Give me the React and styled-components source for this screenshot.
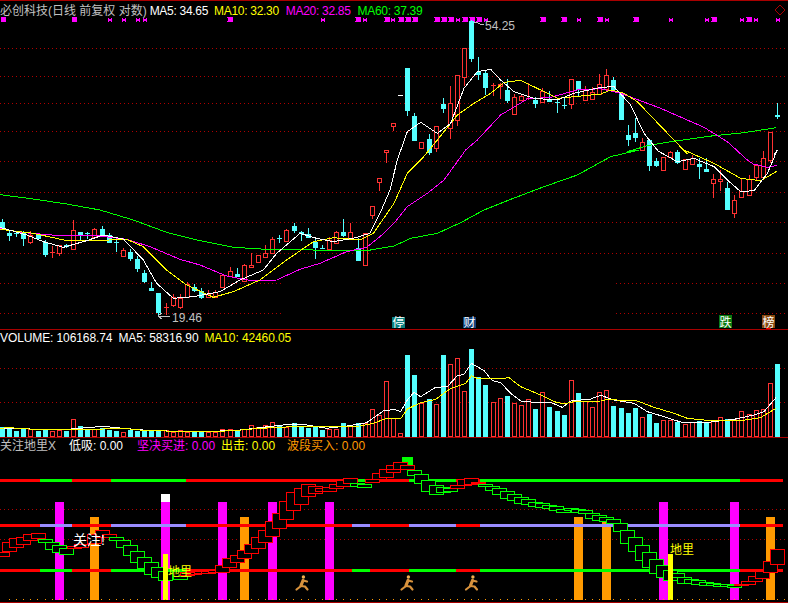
import React from 'react'
import styled, { createGlobalStyle } from 'styled-components'

const GlobalStyle = createGlobalStyle`
  html, body {
    margin: 0;
    padding: 0;
    background: #000;
  }
`

const cyan = '#54ffff'
const red = '#ff3232'
const lineRed = '#ff0000'
const gridRed = '#b00000'

const Page = styled.div`
  display: flex;
  flex-direction: column;
  width: 788px;
  height: 603px;
  overflow: hidden;
  background: #000;
  font-family: 'Liberation Sans', 'Noto Sans CJK SC', sans-serif;
  font-size: 12px;
  line-height: 14px;
`

const Panel = styled.section`
  position: relative;
  flex: none;
  height: ${props => props.$height}px;
  box-sizing: border-box;
  border-top: 1px solid #a80000;
`

const PanelHeader = styled.div`
  position: absolute;
  top: ${props => props.$top || 0}px;
  left: 0;
  display: flex;
  white-space: nowrap;
`

const Legend = styled.span`
  color: ${props => props.$color};
  margin-left: ${props => props.$gap || 0}px;
  letter-spacing: ${props => props.$tight || 0}px;
`

const Chart = styled.svg`
  display: block;
  width: 788px;
  height: 100%;
  shape-rendering: crispEdges;
  text {
    font-family: 'Liberation Sans', 'Noto Sans CJK SC', sans-serif;
  }
`

const MaLine = styled.polyline`
  fill: none;
  stroke: ${props => props.$color};
  stroke-width: 1;
`

const barX = i => Math.floor(2.5 + 7.11 * i)

// candle data traced off the 3x crops: [rising, bodyTop, bodyBottom, high, low]
const candlesA = [
  [0, 97, 118, 87, 118], [0, 128, 137, 120, 152], [0, 128, 131, 122, 140], [0, 130, 147, 122, 167],
  [1, 135, 155, 122, 160], [0, 135, 146, 130, 148], [0, 155, 195, 150, 200], [1, 186, 189, 168, 203],
  [1, 165, 188, 165, 197], [0, 165, 172, 162, 175], [1, 120, 176, 90, 177], [0, 127, 136, 127, 155],
  [0, 129, 132, 125, 145], [1, 117, 142, 115, 143], [0, 116, 133, 108, 135], [0, 135, 158, 130, 160],
  [0, 155, 158, 150, 185], [1, 180, 197, 175, 197], [0, 185, 207, 177, 213], [0, 208, 238, 198, 246],
  [0, 249, 275, 241, 279], [0, 293, 303, 276, 303], [0, 309, 370, 309, 375], [1, 352, 354, 338, 375],
  [1, 321, 345, 312, 350], [1, 324, 352, 312, 356], [1, 282, 320, 275, 322], [0, 292, 304, 282, 306],
  [0, 304, 324, 294, 326], [1, 312, 322, 301, 323], [1, 306, 322, 300, 322], [1, 255, 292, 252, 294],
  [1, 244, 258, 232, 260], [0, 252, 261, 235, 263], [1, 226, 274, 222, 276], [1, 226, 233, 190, 233],
  [1, 196, 218, 195, 219], [1, 190, 202, 165, 203], [1, 147, 190, 142, 192], [0, 145, 147, 135, 160],
  [1, 120, 152, 118, 153], [0, 107, 122, 100, 131], [0, 126, 132, 122, 152], [0, 132, 143, 115, 146],
  [0, 155, 173, 148, 209], [0, 173, 176, 165, 177], [1, 149, 176, 140, 177], [1, 127, 160, 123, 162],
  [0, 125, 137, 87, 140], [1, 127, 145, 98, 148], [0, 175, 213, 145, 215], [1, 130, 225, 128, 227],
].map(([u, t, b, h, l]) => [u, 190 + t / 3, 190 + b / 3, 190 + h / 3, 190 + l / 3])

const candlesB = [
  [1, 206, 215, 206, 219], [1, 178, 182, 178, 191], [1, 150, 152, 150, 163], [1, 123, 126, 123, 131],
  [2, 95, 95, 95, 95],
]

const candlesC = [
  [0, 204, 332, 204, 347], [0, 348, 422, 340, 422], [1, 427, 446, 425, 447], [0, 418, 460, 403, 465],
  [1, 379, 445, 379, 458], [0, 312, 327, 294, 338], [1, 310, 385, 258, 416], [1, 226, 360, 226, 380],
  [1, 145, 232, 145, 258], [0, 64, 177, 60, 186], [0, 215, 225, 171, 240], [0, 219, 264, 209, 284],
  [1, 256, 260, 250, 288], [1, 253, 260, 250, 298], [0, 270, 303, 238, 311], [1, 292, 344, 282, 344],
  [1, 289, 302, 282, 302], [1, 295, 298, 250, 302], [0, 300, 312, 290, 324], [1, 272, 305, 265, 307],
  [0, 296, 305, 274, 307], [0, 305, 307, 300, 339], [0, 316, 319, 292, 327], [1, 238, 314, 238, 327],
  [0, 244, 270, 244, 290], [1, 267, 299, 258, 301], [1, 277, 298, 262, 299], [1, 253, 283, 222, 284],
  [1, 226, 268, 207, 270], [0, 241, 270, 231, 272], [0, 283, 362, 283, 362], [0, 405, 420, 375, 438],
  [0, 400, 416, 355, 426], [1, 427, 451, 415, 453],
].map(([u, t, b, h, l]) => [u, t / 3, b / 3, h / 3, l / 3])

const candlesD = [
  [0, 140, 166, 140, 171], [0, 161, 166, 158, 167], [1, 157, 170, 157, 170], [1, 152, 157, 151, 157],
  [0, 152, 163, 150, 164], [1, 159, 169, 159, 169], [1, 158, 164, 155, 164], [0, 164, 167, 158, 179],
  [0, 169, 172, 158, 172], [1, 179, 183, 174, 198], [1, 179, 181, 170, 191], [0, 188, 210, 182, 210],
  [1, 200, 213, 195, 218], [1, 191, 197, 179, 198], [1, 179, 195, 175, 195], [1, 165, 177, 165, 180],
  [1, 158, 177, 151, 177], [1, 132, 160, 132, 163], [0, 115, 117, 103, 119],
]

const candles = [...candlesA, ...candlesB, ...candlesC, ...candlesD]

// same idea for the volume bars: [rising, top in crop pixels]
const volumes = [
  [0, 291], [0, 293], [0, 303], [0, 297], [1, 298], [0, 303], [0, 300], [1, 303], [1, 299], [0, 303],
  [1, 268], [0, 288], [0, 296], [1, 296], [0, 295], [0, 301], [0, 304], [1, 307], [0, 301], [0, 304],
  [0, 304], [0, 302], [0, 303], [1, 301], [1, 306], [1, 301], [1, 305], [0, 304], [0, 307], [1, 307],
  [1, 306], [1, 298], [1, 298], [0, 304], [1, 296], [1, 286], [1, 292], [1, 286], [1, 277], [0, 286],
  [1, 290], [0, 280], [0, 288], [0, 294], [0, 288], [0, 300], [1, 296], [1, 296], [0, 280], [1, 286],
  [0, 280], [1, 280], [1, 238], [1, 256], [1, 154], [1, 264], [1, 310], [0, 75], [0, 135], [1, 218],
  [0, 207], [1, 222], [0, 75], [1, 102], [1, 84], [1, 183], [0, 57], [0, 142], [0, 165], [1, 217],
  [1, 204], [0, 198], [1, 219], [1, 225], [1, 207], [0, 237], [1, 186], [0, 231], [0, 243], [0, 255],
  [1, 150], [0, 189], [1, 213], [1, 231], [1, 186], [1, 180], [0, 228], [0, 234], [0, 249], [0, 234],
  [1, 261], [0, 252], [0, 279], [1, 270], [1, 270], [0, 276], [1, 282], [1, 276], [0, 273], [0, 279],
  [1, 270], [1, 261], [0, 267], [1, 267], [1, 243], [1, 252], [1, 240], [1, 237], [1, 159], [0, 102],
]

const pts = (list, dx, dy) => list.map(([x, y]) => `${dx + x / 3},${dy + y / 3}`).join(' ')

const ma60 = [
  pts([[0, 14], [100, 27], [200, 42], [300, 60], [400, 90], [500, 127], [600, 152], [700, 172], [800, 178], [900, 178], [1000, 183], [1100, 182], [1182, 168]], 0, 190),
  pts([[50, 265], [130, 250], [200, 218], [270, 180], [350, 148], [450, 110], [550, 75], [650, 20], [735, 0]], 394, 150),
  pts([[700, 455], [760, 437], [830, 425], [960, 407], [1050, 398], [1147, 383]], 394, 0),
].join(' ')

const ma20 = [
  pts([[0, 115], [60, 127], [180, 137], [300, 138], [380, 148], [450, 170], [540, 208], [600, 225], [680, 258], [760, 273], [830, 270], [900, 238], [960, 220], [1040, 185], [1100, 172], [1140, 140], [1182, 100]], 0, 190),
  pts([[40, 170], [100, 130], [150, 90], [215, 0]], 394, 150),
  pts([[250, 420], [320, 345], [400, 297], [470, 292], [550, 270], [620, 266], [680, 280], [800, 325], [930, 382], [1000, 425], [1060, 480]], 394, 0),
  pts([[1078, 42], [1120, 52], [1150, 46]], 394, 150),
].join(' ')

const ma10 = [
  pts([[0, 118], [100, 130], [200, 152], [300, 151], [380, 148], [430, 170], [500, 240], [560, 285], [640, 322], [700, 305], [780, 270], [860, 210], [940, 155], [1000, 143], [1080, 150], [1120, 130], [1182, 40]], 0, 190),
  pts([[40, 70], [85, 25]], 394, 150),
  pts([[130, 420], [190, 345], [240, 310], [290, 280], [330, 247], [380, 241], [440, 270], [490, 295], [560, 288], [620, 282], [650, 270], [690, 280], [730, 305], [790, 368], [840, 420], [880, 462]], 394, 0),
  pts([[870, 0], [960, 40], [1040, 85], [1100, 92], [1150, 63]], 394, 150),
].join(' ')

const ma5 = [
  pts([[0, 112], [80, 135], [130, 155], [190, 172], [260, 152], [310, 135], [370, 147], [430, 210], [470, 280], [520, 325], [580, 320], [660, 305], [720, 270], [790, 240], [830, 190], [900, 130], [950, 145], [1000, 155], [1060, 145], [1110, 130], [1140, 70], [1170, 0]], 0, 190),
  pts([[10, 480], [40, 395], [80, 367], [130, 400], [170, 370], [210, 265], [250, 215], [290, 208], [320, 240], [360, 275], [420, 295], [490, 300], [540, 280], [620, 262], [660, 260], [710, 315], [750, 400], [790, 450]], 394, 0),
  pts([[790, 2], [850, 35], [900, 25], [960, 50], [1000, 90], [1040, 125], [1080, 122], [1120, 70], [1150, 0]], 394, 150),
  pts([[1140, 465], [1150, 450]], 394, 0),
].join(' ')

const volWhite = [
  pts([[0, 295], [60, 295], [105, 298], [200, 298], [260, 293], [310, 289], [380, 296], [430, 300], [500, 303], [600, 306], [660, 303], [720, 300], [780, 293], [830, 287], [880, 282], [920, 285], [980, 295], [1040, 288], [1100, 278], [1150, 243], [1182, 238]], 0, 330),
  pts([[20, 245], [40, 210], [60, 187], [80, 200], [125, 172], [160, 170], [190, 137], [210, 133], [232, 100], [270, 122], [295, 152], [320, 158], [350, 190], [380, 213], [420, 217], [470, 217], [505, 232], [530, 213], [590, 207], [620, 196], [660, 210], [720, 220], [760, 245], [810, 260], [860, 276], [950, 276], [1020, 268], [1080, 255], [1110, 245], [1146, 203]], 394, 330),
].join(' ')

const volYellow = [
  pts([[0, 296], [20, 293], [80, 296], [105, 300], [380, 296], [430, 301], [600, 306], [700, 302], [780, 295], [880, 290], [1000, 290], [1080, 288], [1120, 280], [1160, 265], [1182, 264]], 0, 330),
  pts([[20, 266], [40, 237], [80, 218], [125, 208], [170, 175], [215, 160], [232, 137], [250, 145], [330, 145], [345, 143], [380, 170], [440, 195], [480, 215], [510, 222], [540, 215], [620, 213], [640, 208], [700, 212], [725, 211], [780, 232], [840, 250], [880, 265], [960, 273], [1040, 272], [1100, 263], [1147, 234]], 394, 330),
].join(' ')

// [x, big]
const markers = [
  [3.5, 1], [74.5, 1], [110, 0], [124, 0], [138, 0], [145, 0], [230, 1], [323, 0], [358, 1], [365, 0], [387, 1], [393, 0],
  [401, 1], [408, 1], [415, 1], [437, 1], [444, 1], [451, 1], [458, 0], [465, 1], [472, 1], [479, 1], [486, 0],
  [543, 1], [564, 1], [579, 0], [600, 1], [607, 0], [636, 1], [671, 0], [707, 0], [714, 1], [742, 0], [749, 1], [756, 0], [778, 0],
]

const greens = [[40, 72], [111, 186], [352, 370], [409, 456], [480, 740]]

const boxesLeft = [
  [1, -15, 290, 302], [1, 6, 262, 290], [1, 27, 250, 278], [1, 48, 246, 266], [1, 69, 238, 257], [1, 93, 235, 251],
  [0, 114, 252, 260], [0, 135, 262, 282], [0, 156, 271, 293], [0, 177, 280, 299], [1, 201, 272, 278], [1, 222, 266, 274],
  [1, 261, 236, 264], [1, 285, 226, 248], [1, 306, 238, 246], [0, 327, 247, 255], [0, 348, 256, 278], [0, 369, 271, 302],
  [0, 390, 289, 323], [0, 411, 307, 341], [0, 432, 322, 358], [0, 453, 337, 368], [0, 474, 349, 375], [0, 519, 362, 371],
  [1, 540, 350, 358], [1, 561, 352, 358], [1, 582, 349, 356], [1, 603, 349, 355], [1, 624, 346, 353], [1, 645, 331, 352],
  [1, 666, 310, 336], [1, 690, 301, 323], [1, 711, 286, 311], [1, 732, 268, 296], [1, 753, 247, 281], [1, 774, 226, 263],
  [1, 795, 198, 242], [1, 816, 175, 221], [1, 837, 139, 194], [1, 858, 111, 166], [1, 882, 99, 146], [1, 903, 88, 125],
  [1, 924, 94, 116], [1, 945, 100, 110], [1, 966, 95, 107], [1, 987, 86, 99], [1, 1008, 76, 93], [1, 1029, 70, 86],
  [0, 1050, 84, 92], [0, 1071, 87, 95], [1, 1095, 73, 83], [1, 1116, 55, 74], [1, 1137, 42, 65], [1, 1158, 31, 53],
]

const boxesRight = [
  [1, -24, 43, 52], [1, -3, 22, 42], [1, 18, 31, 42], [0, 39, 46, 60], [0, 60, 58, 86], [0, 81, 76, 110], [0, 105, 91, 119],
  [0, 126, 97, 112], [0, 147, 100, 109], [1, 168, 90, 98], [1, 189, 73, 92], [1, 210, 70, 87], [1, 231, 82, 86],
  [0, 252, 87, 94], [0, 273, 94, 106], [0, 294, 100, 117], [0, 318, 108, 128], [0, 339, 118, 137], [0, 360, 127, 146],
  [0, 381, 133, 149], [0, 402, 142, 155], [0, 423, 145, 158], [0, 444, 151, 161], [0, 465, 154, 167], [0, 486, 161, 170],
  [0, 509, 160, 166], [0, 530, 162, 170], [0, 552, 166, 176], [0, 573, 175, 190], [0, 594, 181, 197], [0, 615, 187, 200],
  [0, 636, 193, 206], [0, 657, 205, 230], [0, 678, 226, 266], [0, 702, 247, 290], [0, 723, 271, 317], [0, 744, 292, 338],
  [0, 765, 313, 356], [0, 786, 331, 368], [0, 807, 344, 374], [0, 828, 355, 368], [0, 849, 367, 386], [0, 870, 373, 386],
  [0, 891, 376, 389], [0, 915, 382, 391], [0, 936, 385, 391], [0, 957, 386, 391], [0, 978, 388, 395], [0, 999, 390, 395],
  [1, 1020, 388, 391], [1, 1041, 379, 387], [1, 1062, 364, 380], [1, 1083, 347, 368], [1, 1107, 319, 352], [1, 1128, 283, 328],
]

const boxes = [
  ...boxesLeft.map(([r, x, t, b]) => [r, x / 3, 455 + t / 3, 455 + b / 3]),
  ...boxesRight.map(([r, x, t, b]) => [r, 394 + x / 3, 455 + t / 3, 455 + b / 3]),
]

const GridLines = ({ rows, from = 0, to = 785 }) =>
  rows.map(y => (
    <line key={y} x1={from} x2={to} y1={y + 0.5} y2={y + 0.5} stroke={gridRed} strokeDasharray="1 3" />
  ))

const Candle = ({ index, data }) => {
  const [up, top, bottom, high, low] = data
  const x = barX(index)
  const color = up ? red : cyan
  if (up === 2) return <rect x={x - 2} y={top} width={5} height={1} fill="#fff" />
  const flat = bottom - top < 2
  return (
    <g>
      <rect x={x} y={Math.round(high)} width={1} height={Math.max(1, Math.round(low - high))} fill={color} />
      {flat ? (
        <rect x={x - 2} y={Math.round(top)} width={5} height={1} fill={color} />
      ) : up ? (
        <rect x={x - 1.5} y={Math.round(top) + 0.5} width={4} height={Math.round(bottom - top)} fill="#000" stroke={color} />
      ) : (
        <rect x={x - 2} y={Math.round(top)} width={5} height={Math.round(bottom - top)} fill={color} />
      )}
    </g>
  )
}

const Marker = ({ x, big }) => (
  <path
    d={big ? `M${x - 2} 17.5h4v4h-4z M${x - 2.5} 17l5 5 M${x + 2.5} 17l-5 5` : `M${x - 2} 18l4 4 M${x + 2} 18l-4 4 M${x - 1} 19.5h2v1h-2z`}
    fill="#ff00ff"
    stroke="#ff00ff"
    strokeWidth={big ? 1 : 1.2}
  />
)

const Badge = ({ x, y, h = 11, fill, children }) => (
  <g>
    <rect x={x} y={y} width={13} height={h} fill={fill} />
    <text x={x + 0.5} y={y + h - 1} fontSize="12" fill="#fff" style={{ shapeRendering: 'auto' }}>
      {children}
    </text>
  </g>
)

const PriceChart = () => (
  <Chart viewBox="0 1 788 328">
    <GridLines rows={[48, 76, 103, 131, 161, 192, 222, 253]} />
    <GridLines rows={[283, 313]} to={281} />
    <GridLines rows={[283, 313]} from={616} />
    {markers.map(([x, big]) => <Marker key={x} x={x} big={big} />)}
    {candles.map((c, i) => <Candle key={i} index={i} data={c} />)}
    <MaLine points={ma60} $color="#00ff00" />
    <MaLine points={ma20} $color="#ff00ff" />
    <MaLine points={ma10} $color="#ffff00" />
    <MaLine points={ma5} $color="#ffffff" />
    <path d="M775 10l5-5 5 5-5 5z" fill="none" stroke="#a80000" />
    <polyline points="474,22 478,23 480,24 484,24" fill="none" stroke="#c0c0c0" />
    <text x="485" y="30" fontSize="12" fill="#c0c0c0">54.25</text>
    <path d="M170 316h-12M162 313l-4 3 4 3" fill="none" stroke="#c0c0c0" />
    <text x="172" y="322" fontSize="12" fill="#c0c0c0">19.46</text>
    <Badge x={392} y={317} fill="#0a8080">停</Badge>
    <Badge x={463} y={317} fill="#10407a">财</Badge>
    <Badge x={719} y={315} h={13} fill="#0a7a10">跌</Badge>
    <Badge x={762} y={315} h={13} fill="#8a4a10">榜</Badge>
    <rect x={766} y={328} width={5} height={1} fill={lineRed} />
  </Chart>
)

const VolumeChart = () => (
  <Chart viewBox="0 330 788 107">
    <GridLines rows={[368, 402]} />
    {volumes.map(([up, z], i) => {
      const top = Math.round(330 + z / 3)
      const x = barX(i)
      return up ? (
        <rect key={i} x={x - 1.5} y={top + 0.5} width={4} height={436 - top} fill="#000" stroke={red} />
      ) : (
        <rect key={i} x={x - 2} y={top} width={5} height={437 - top} fill={cyan} />
      )
    })}
    <MaLine points={volWhite} $color="#ffffff" />
    <MaLine points={volYellow} $color="#ffff00" />
  </Chart>
)

const Runner = ({ x }) => (
  <g transform={`translate(${x} 583)`} style={{ shapeRendering: 'auto' }} fill="none" stroke="#d8923c" strokeWidth="2.2" strokeLinecap="round" strokeLinejoin="round">
    <circle cx="1.4" cy="-6" r="1.7" fill="#f0b050" stroke="none" />
    <path d="M1-2.5L-1 2.5" strokeWidth="3.2" />
    <path d="M1-2.5l4 1M-1 3l-4.5 3.5" />
    <path d="M-1 3l4 .5 2.5 3" />
  </g>
)

const Rail = ({ y, accent }) => (
  <g>
    <rect x={0} y={y} width={783} height={3} fill={lineRed} />
    {greens.map(([a, b]) => <rect key={a} x={a} y={y} width={b - a} height={3} fill={accent} />)}
  </g>
)

const SignalChart = () => (
  <Chart viewBox="0 438 788 165">
    <GridLines rows={[509, 539]} />
    {[55, 161, 218, 268, 325, 659, 730].map(x => <rect key={x} x={x} y={502} width={9} height={98} fill="#ff00ff" />)}
    {[90, 240, 574, 602, 766].map(x => <rect key={x} x={x} y={517} width={9} height={83} fill="#ff9a00" />)}
    <rect x={161} y={494} width={9} height={8} fill="#fff" />
    <Rail y={479} accent="#00ff00" />
    <Rail y={524} accent="#9a8cff" />
    <Rail y={569} accent="#00ff00" />
    <rect x={402} y={457} width={11} height={8} fill="#00ff00" />
    {boxes.map(([r, x, t, b], i) => (
      <rect
        key={i}
        x={Math.round(x) + 0.5}
        y={Math.round(t) + 0.5}
        width={14}
        height={Math.max(1, Math.round(b - t))}
        fill="#000"
        stroke={r ? lineRed : '#00ff00'}
      />
    ))}
    <rect x={163} y={554} width={5} height={46} fill="#ffff00" />
    <rect x={668} y={554} width={5} height={46} fill="#ffff00" />
    <text x={73} y={545} fontSize="14" fill="#fff">关注!</text>
    <text x={168} y={576} fontSize="12" fill="#ffff00">地里</text>
    <text x={670} y={554} fontSize="12" fill="#ffff00">地里</text>
    <Runner x={302} />
    <Runner x={407} />
    <Runner x={471.5} />
    {Array.from({ length: 110 }, (_, i) => (
      <rect key={i} x={barX(i) + 7} y={599} width={1} height={1} fill="#ff9a00" />
    ))}
    <rect x={0} y={602} width={788} height={1} fill="#a80000" />
  </Chart>
)

export default function App() {
  return (
    <Page>
      <GlobalStyle />
      <Panel $height={329}>
        <PanelHeader $top={3}>
          <Legend $color="#c0c0c0">必创科技(日线 前复权 对数)</Legend>
          <Legend $color="#fff" $gap={3} $tight={-0.3}>MA5: 34.65</Legend>
          <Legend $color="#ffff00" $gap={6} $tight={-0.3}>MA10: 32.30</Legend>
          <Legend $color="#ff00ff" $gap={7} $tight={-0.3}>MA20: 32.85</Legend>
          <Legend $color="#00ff00" $gap={7} $tight={-0.3}>MA60: 37.39</Legend>
        </PanelHeader>
        <PriceChart />
      </Panel>
      <Panel $height={108}>
        <PanelHeader $top={1}>
          <Legend $color="#fff" $tight={-0.1}>VOLUME: 106168.74</Legend>
          <Legend $color="#fff" $gap={6} $tight={-0.1}>MA5: 58316.90</Legend>
          <Legend $color="#ffff00" $gap={6} $tight={-0.1}>MA10: 42460.05</Legend>
        </PanelHeader>
        <VolumeChart />
      </Panel>
      <Panel $height={166}>
        <PanelHeader $top={1}>
          <Legend $color="#c0c0c0">关注地里X</Legend>
          <Legend $color="#fff" $gap={13}>低吸: 0.00</Legend>
          <Legend $color="#ff00ff" $gap={14}>坚决买进: 0.00</Legend>
          <Legend $color="#ffff00" $gap={6}>出击: 0.00</Legend>
          <Legend $color="#ff9a00" $gap={12}>波段买入: 0.00</Legend>
        </PanelHeader>
        <SignalChart />
      </Panel>
    </Page>
  )
}
